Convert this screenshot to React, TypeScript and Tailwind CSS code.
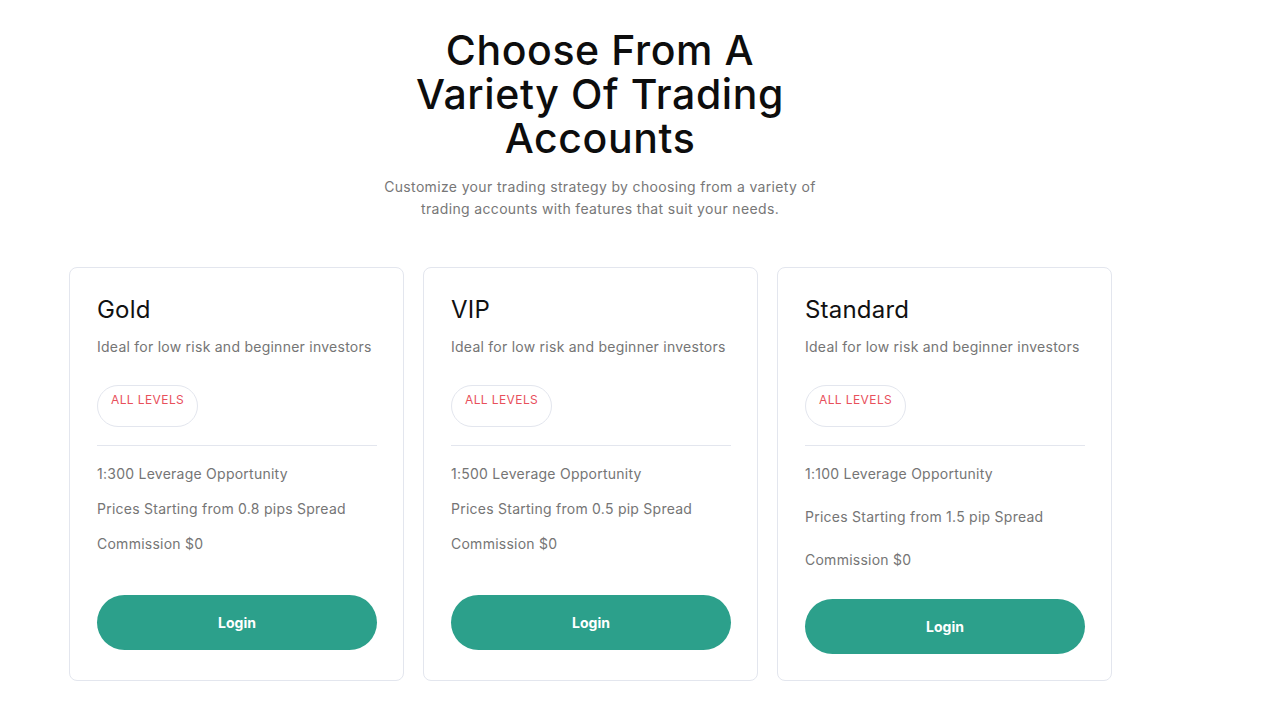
const accounts = [
    {
        name: "Gold",
        features: ["1:300 Leverage Opportunity", "Prices Starting from 0.8 pips Spread", "Commission $0"],
        wide: false,
    },
    {
        name: "VIP",
        features: ["1:500 Leverage Opportunity", "Prices Starting from 0.5 pip Spread", "Commission $0"],
        wide: false,
    },
    {
        name: "Standard",
        features: ["1:100 Leverage Opportunity", "Prices Starting from 1.5 pip Spread", "Commission $0"],
        wide: true,
    },
]

const AccountCard = ({ name, features, wide }: { name: string; features: string[]; wide: boolean }) => {
    return (
        <div className="w-[335px] h-[414px] border border-[#e3e6ee] rounded-lg px-[27px] pt-[26px] bg-white">
            <h3 className="text-[24px] leading-[32px] text-[#111] font-normal tracking-[0.2px]">{name}</h3>
            <p className="mt-[11px] text-[14px] leading-[20px] text-[#757575] tracking-[0.25px]">Ideal for low risk and beginner investors</p>
            <div className="mt-[28px] inline-flex h-[42px] px-[13px] pt-[6px] rounded-full border border-[#e3e6ee]">
                <span className="text-[12px] leading-[16px] tracking-[0.4px] text-[#e8505b]">ALL LEVELS</span>
            </div>
            <div className="mt-[18px] h-px bg-[#e3e6ee] w-[280px]"></div>
            <ul className={wide ? "mt-[18px] flex flex-col gap-[23px]" : "mt-[18px] flex flex-col gap-[15px]"}>
                {features.map((f) => (
                    <li key={f} className="text-[14px] leading-[20px] text-[#757575] tracking-[0.25px]">{f}</li>
                ))}
            </ul>
            <button
                className={
                    wide
                        ? "mt-[29px] w-[280px] h-[55px] rounded-full bg-[#2ca08b] text-white text-[14px] font-bold"
                        : "mt-[41px] w-[280px] h-[55px] rounded-full bg-[#2ca08b] text-white text-[14px] font-bold"
                }
            >
                Login
            </button>
        </div>
    )
}

const App = () => {
    return (
        <div className="min-h-screen bg-white font-['Inter',sans-serif] pt-[28px]">
            <div className="w-[1200px] flex flex-col items-center">
                <h1 className="w-[420px] text-center text-[41px] leading-[44px] font-medium text-[#0d0d0d] tracking-[0.6px]">
                    Choose From A Variety Of Trading Accounts
                </h1>
                <p className="mt-[16px] w-[460px] text-center text-[14px] leading-[22px] text-[#777] tracking-[0.35px]">
                    Customize your trading strategy by choosing from a variety of trading accounts with features that suit your needs.
                </p>
            </div>
            <div className="mt-[47px] ml-[69px] flex gap-[19px]">
                {accounts.map((a) => (
                    <AccountCard key={a.name} name={a.name} features={a.features} wide={a.wide} />
                ))}
            </div>
        </div>
    )
}

export default App
